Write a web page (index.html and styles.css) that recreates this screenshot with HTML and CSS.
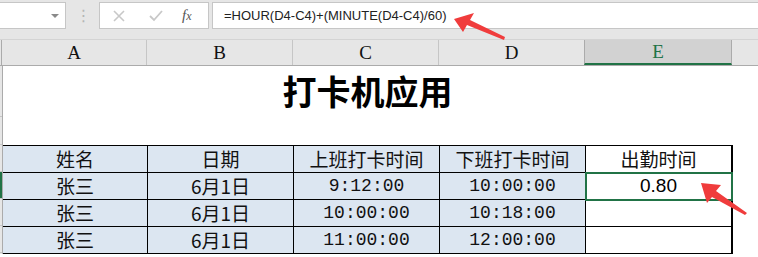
FILE: index.html
```html
<!DOCTYPE html>
<html lang="zh-CN">
<head>
    <meta charset="UTF-8">
    <title>打卡机应用</title>
    <link rel="stylesheet" href="styles.css">
</head>
<body>
    <div class="window">
        <div class="toolbar">
            <div class="name-box">
                <span class="caret"></span>
            </div>
            <div class="grip">⋮</div>
            <div class="buttons">
                <svg class="btn-icon cancel" width="14" height="14" viewBox="0 0 14 14">
                    <path d="M2 2 L12 12 M12 2 L2 12" stroke="#c8c8c8" stroke-width="1.6" fill="none"/>
                </svg>
                <svg class="btn-icon enter" width="16" height="14" viewBox="0 0 16 14">
                    <path d="M2 7 L6 11 L14 2" stroke="#c8c8c8" stroke-width="1.8" fill="none"/>
                </svg>
                <span class="fx"><i>f</i><i class="x">x</i></span>
            </div>
            <div class="formula">=HOUR(D4-C4)+(MINUTE(D4-C4)/60)</div>
        </div>

        <div class="col-heads">
            <div class="corner"></div>
            <div class="col-head">A</div>
            <div class="col-head">B</div>
            <div class="col-head">C</div>
            <div class="col-head">D</div>
            <div class="col-head active">E</div>
            <div class="col-head rest"></div>
        </div>

        <div class="sheet">
            <div class="row-heads">
                <div class="rh r1"></div>
                <div class="rh r2"></div>
                <div class="rh"></div>
                <div class="rh sel"></div>
                <div class="rh"></div>
                <div class="rh"></div>
            </div>
            <div class="grid">
                <div class="title">打卡机应用</div>
                <table class="data">
                    <tr class="head">
                        <td class="blue">姓名</td>
                        <td class="blue">日期</td>
                        <td class="blue">上班打卡时间</td>
                        <td class="blue">下班打卡时间</td>
                        <td>出勤时间</td>
                    </tr>
                    <tr>
                        <td class="blue">张三</td>
                        <td class="blue">6月1日</td>
                        <td class="blue num">9:12:00</td>
                        <td class="blue num">10:00:00</td>
                        <td class="selected">0.80</td>
                    </tr>
                    <tr>
                        <td class="blue">张三</td>
                        <td class="blue">6月1日</td>
                        <td class="blue num">10:00:00</td>
                        <td class="blue num">10:18:00</td>
                        <td></td>
                    </tr>
                    <tr>
                        <td class="blue">张三</td>
                        <td class="blue">6月1日</td>
                        <td class="blue num">11:00:00</td>
                        <td class="blue num">12:00:00</td>
                        <td></td>
                    </tr>
                </table>
            </div>
        </div>

        <svg class="arrow arrow-top" width="70" height="40" viewBox="0 0 70 40">
            <polygon points="4,10 24,4 20,11 55,28 54,31 17,16 13,23" fill="#f03c3c"/>
        </svg>
        <svg class="arrow arrow-cell" width="60" height="50" viewBox="0 0 60 50">
            <polygon points="3,3 23,5 18,11 49,33 47,35 14,17 9,23" fill="#f03c3c"/>
        </svg>
    </div>
</body>
</html>
```

FILE: styles.css
```css
body {
    margin: 0;
    background-color: #fff;
    font-family: "Noto Sans CJK SC", sans-serif;
}
.window {
    position: relative;
    width: 758px;
    height: 257px;
    overflow: hidden;
}
.toolbar {
    display: flex;
    align-items: flex-start;
    height: 39px;
    background-color: #e6e6e6;
    box-sizing: border-box;
}
.name-box {
    position: relative;
    width: 68px;
    height: 27px;
    margin-top: 2px;
    margin-left: -2px;
    background-color: #fff;
    border: 1px solid #c6c6c6;
    box-sizing: border-box;
}
.caret {
    position: absolute;
    right: 6px;
    top: 11px;
    border-left: 4px solid transparent;
    border-right: 4px solid transparent;
    border-top: 4px solid #8a8a8a;
}
.grip {
    width: 33px;
    padding-left: 2px;
    box-sizing: border-box;
    text-align: center;
    color: #b5b5b5;
    font-size: 16px;
    line-height: 31px;
    font-family: "DejaVu Sans", sans-serif;
}
.buttons {
    display: flex;
    align-items: center;
    width: 110px;
    height: 27px;
    margin-top: 2px;
    background-color: #fff;
    border: 1px solid #c6c6c6;
    box-sizing: border-box;
}
.cancel {
    margin-left: 12px;
}
.enter {
    margin-left: 22px;
}
.fx {
    margin-left: 18px;
    font-family: "Liberation Serif", serif;
    font-size: 15px;
    color: #555;
}
.fx .x {
    font-size: 12px;
}
.formula {
    flex: 1;
    height: 27px;
    margin-top: 2px;
    margin-left: 3px;
    padding-left: 11px;
    background-color: #fff;
    border: 1px solid #c6c6c6;
    border-right: none;
    box-sizing: border-box;
    font-family: "Liberation Sans", sans-serif;
    font-size: 13px;
    line-height: 25px;
    color: #222;
}
.col-heads {
    display: flex;
    height: 27px;
    background-color: #e6e6e6;
    border-top: 1px solid #d4d4d4;
    border-bottom: 1px solid #ababab;
    box-sizing: border-box;
}
.corner {
    width: 2px;
    border-right: 1px solid #ababab;
    box-sizing: border-box;
}
.col-head {
    width: 146px;
    border-right: 1px solid #c6c6c6;
    box-sizing: border-box;
    text-align: center;
    font-family: "Liberation Serif", serif;
    font-size: 19px;
    line-height: 26px;
    color: #111;
}
.col-head:nth-child(2) {
    width: 145px;
}
.col-head.active {
    background-color: #d2d2d2;
    color: #217346;
    border-bottom: 2px solid #217346;
    border-left: 1px solid #ababab;
    border-right: 1px solid #ababab;
    margin-left: -1px;
    width: 148px;
    line-height: 24px;
}
.col-head.rest {
    flex: 1;
    border-right: none;
}
.sheet {
    display: flex;
}
.row-heads {
    width: 2px;
    background-color: #e6e6e6;
    border-right: 1px solid #ababab;
}
.rh {
    height: 27px;
    border-bottom: 1px solid #c6c6c6;
    box-sizing: border-box;
}
.rh.r1 {
    height: 51px;
}
.rh.r2 {
    height: 28px;
}
.rh.sel {
    background-color: #217346;
}
.grid {
    flex: 1;
}
.title {
    width: 729px;
    height: 79px;
    padding-top: 2px;
    box-sizing: border-box;
    text-align: center;
    font-size: 34px;
    font-weight: 700;
    color: #000;
    line-height: 45px;
}
.data {
    border-collapse: collapse;
    table-layout: fixed;
}
.data td {
    width: 145px;
    height: 26px;
    padding: 0;
    border: 1px solid #000;
    text-align: center;
    font-size: 19px;
    line-height: 22px;
    color: #111;
    white-space: nowrap;
}
.data td:first-child {
    width: 144px;
    border-left: none;
}
.data td:last-child {
    border-right: 2px solid #000;
}
.data .blue {
    background-color: #dce6f1;
}
.data td.num {
    font-family: "Liberation Mono", monospace;
    font-size: 18px;
}
.data td.selected {
    outline: 2px solid #217346;
    outline-offset: -1px;
    font-family: "Liberation Sans", sans-serif;
    font-size: 19px;
    color: #000;
}
.arrow {
    position: absolute;
}
.arrow-top {
    left: 450px;
    top: 9px;
}
.arrow-cell {
    left: 698px;
    top: 180px;
}
```
